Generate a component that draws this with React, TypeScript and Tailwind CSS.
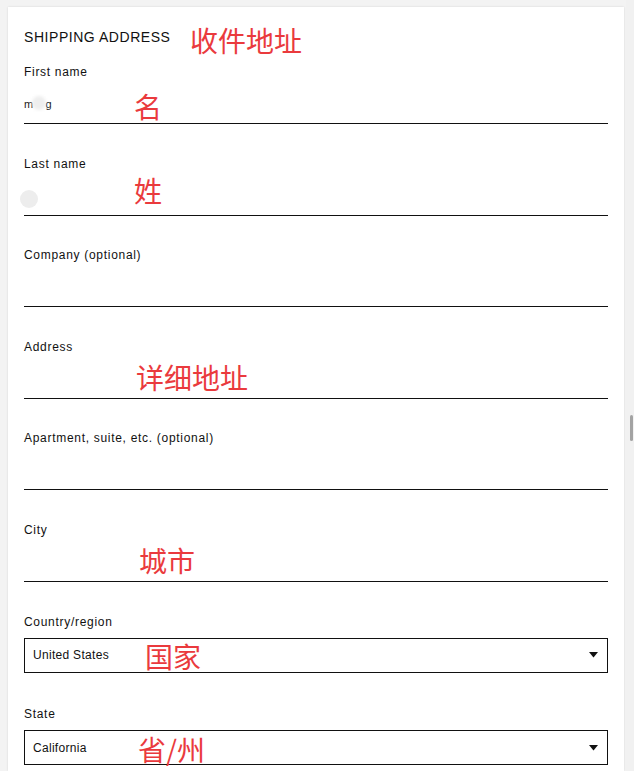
import React from "react";

const font = { fontFamily: '"Liberation Sans", Arial, sans-serif' };

function Underlined({ label, children }: { label: string; children?: React.ReactNode }) {
  return (
    <div className="flex flex-col">
      <div className="h-[16px] text-[12px] leading-[16px] text-[#111] tracking-[0.7px]">{label}</div>
      <div className="relative h-[44px] border-b border-[#111]">{children}</div>
    </div>
  );
}

function SelectField({ label, value, extra }: { label: string; value: string; extra?: string }) {
  return (
    <div className={"flex flex-col " + (extra ?? "")}>
      <div className="h-[16px] text-[12px] leading-[16px] text-[#111] tracking-[0.7px]">{label}</div>
      <div className="mt-[8px] flex h-[35px] items-center justify-between border border-[#111] pl-[8px] pr-[9px]">
        <span className="text-[12px] tracking-[0.3px] text-[#111]">{value}</span>
        <svg width="9" height="6" viewBox="0 0 9 6">
          <path d="M0 0 H9 L4.5 5.5 Z" fill="#111" />
        </svg>
      </div>
    </div>
  );
}

const red = "absolute text-[28px] leading-[28px] text-[#ea3a3d]";
const cjk = { fontFamily: '"Noto Sans CJK SC", sans-serif' };

export default function App() {
  return (
    <div className="relative flex h-[771px] w-[634px] overflow-hidden bg-[#f3f3f3]" style={font}>
      <div className="ml-[8px] mt-[7px] w-[616px] bg-white pl-[16px] pr-[16px] pt-[20px] shadow-[0_0_2px_rgba(0,0,0,0.12)]">
        <div className="h-[20px] text-[14px] leading-[20px] tracking-[0.55px] text-[#111]">SHIPPING ADDRESS</div>
        <div className="mt-[17px] flex flex-col gap-[31.6px]">
          <Underlined label="First name">
            <div className="absolute left-0 top-[17px] text-[11px] leading-[14px] text-[#222]">m&nbsp;&nbsp;&nbsp;&nbsp;g</div>
            <div className="absolute left-[8px] top-[16px] h-[14px] w-[14px] rounded-full bg-[#eeeeee] blur-[1.5px]" />
          </Underlined>
          <Underlined label="Last name">
            <div className="absolute left-[-4px] top-[18px] h-[18px] w-[18px] rounded-full bg-[#ededed] blur-[0.5px]" />
          </Underlined>
          <Underlined label="Company (optional)" />
          <Underlined label="Address" />
          <Underlined label="Apartment, suite, etc. (optional)" />
          <Underlined label="City" />
          <SelectField label="Country/region" value="United States" />
          <SelectField label="State" value="California" extra="mt-[2px]" />
        </div>
      </div>
      <div className="ml-[2px] flex w-[8px] flex-col bg-[#f1f1f1] pt-[415px]">
        <div className="ml-[4px] h-[26px] w-[3px] rounded-full bg-[#a3a3a3]" />
      </div>

      <div className={red} style={{ ...cjk, left: 190, top: 26 }}>收件地址</div>
      <div className={red} style={{ ...cjk, left: 134, top: 92 }}>名</div>
      <div className={red} style={{ ...cjk, left: 134, top: 176 }}>姓</div>
      <div className={red} style={{ ...cjk, left: 136, top: 363 }}>详细地址</div>
      <div className={red} style={{ ...cjk, left: 139, top: 546 }}>城市</div>
      <div className={red} style={{ ...cjk, left: 145, top: 642 }}>国家</div>
      <div className={red} style={{ ...cjk, left: 138, top: 735 }}>省/州</div>
    </div>
  );
}
